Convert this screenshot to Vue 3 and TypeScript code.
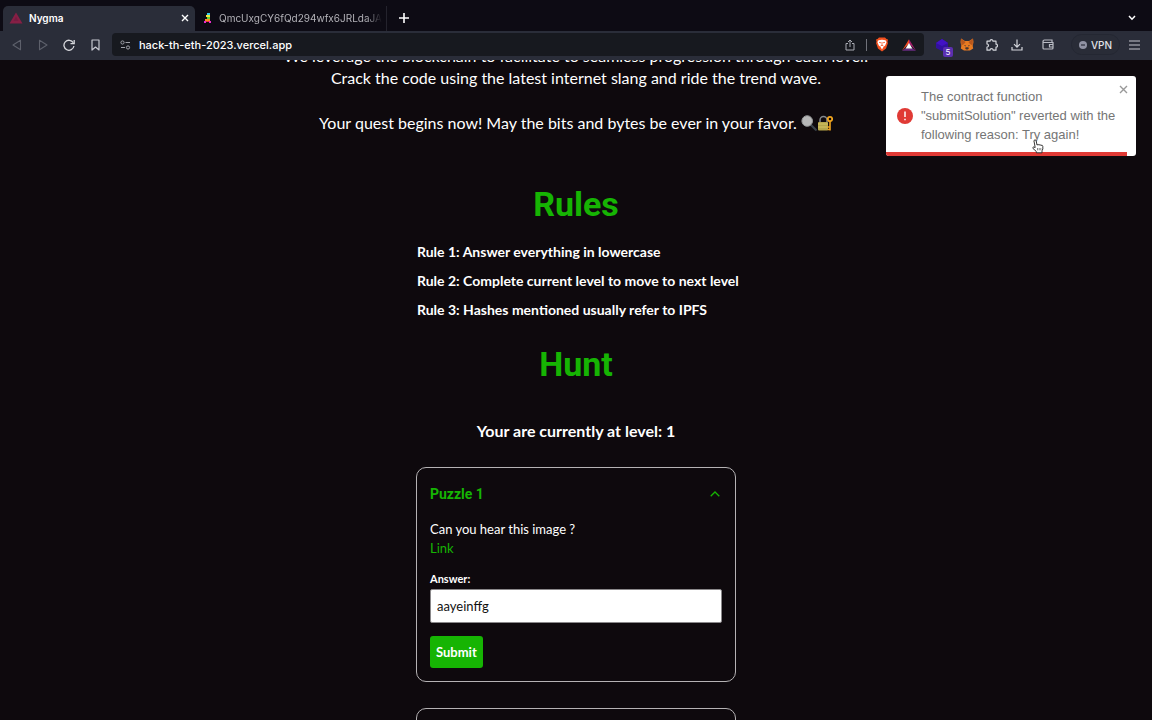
<script setup lang="ts">
import { ref } from 'vue'

const rules: string[] = [
  'Rule 1: Answer everything in lowercase',
  'Rule 2: Complete current level to move to next level',
  'Rule 3: Hashes mentioned usually refer to IPFS',
]
const level = ref(1)
const answer = ref('aayeinffg')
const open = ref(true)
const toastVisible = ref(true)
const progress = ref(96.4)
</script>

<template>
  <div class="window">
    <header class="chrome">
      <div class="tabs">
        <div class="tab active">
          <svg width="14" height="12" viewBox="0 0 14 12"><path d="M7 0.5 13.5 11.5H0.5Z" fill="#861f45" /><path d="M7 4.5 9.5 9h-5Z" fill="#751c42" /></svg>
          <span class="tab-title">Nygma</span>
          <button class="icon-btn tab-close" aria-label="Close tab">
            <svg width="8" height="8" viewBox="0 0 8 8"><path d="M1 1l6 6M7 1L1 7" stroke="#fff" stroke-width="1.4" /></svg>
          </button>
        </div>
        <div class="tab second">
          <svg width="10" height="12" viewBox="0 0 10 12">
            <path d="M4 1h3v2H4z" fill="#35c8e8" /><path d="M3 3h4v2H3z" fill="#f4e43a" /><path d="M4 5h3v2H4z" fill="#58d13b" />
            <path d="M2 7h5v2H2z" fill="#f58a24" /><path d="M1 9h2v2H1zM6 9h2v2H6z" fill="#e72ccb" /><path d="M3 9h3v1H3z" fill="#e83838" />
          </svg>
          <span class="tab-title">QmcUxgCY6fQd294wfx6JRLdaJAj7</span>
        </div>
        <button class="icon-btn new-tab" aria-label="New tab">
          <svg width="10" height="10" viewBox="0 0 10 10"><path d="M5 0v10M0 5h10" stroke="#fff" stroke-width="1.6" /></svg>
        </button>
        <button class="icon-btn tab-list" aria-label="Search tabs">
          <svg width="8" height="6" viewBox="0 0 8 6"><path d="M1 1l3 3.2L7 1" fill="none" stroke="#fff" stroke-width="1.5" /></svg>
        </button>
      </div>
      <div class="toolbar">
        <button class="icon-btn nav" aria-label="Back">
          <svg width="10" height="12" viewBox="0 0 10 12"><path d="M8.5 1.3v9.4L1 6Z" fill="none" stroke="#5d606b" stroke-width="1.1" stroke-linejoin="round" /></svg>
        </button>
        <button class="icon-btn nav" aria-label="Forward">
          <svg width="10" height="12" viewBox="0 0 10 12"><path d="M1.5 1.3v9.4L9 6Z" fill="none" stroke="#5d606b" stroke-width="1.1" stroke-linejoin="round" /></svg>
        </button>
        <button class="icon-btn nav" aria-label="Reload">
          <svg width="12" height="12" viewBox="0 0 12 12"><path d="M10.3 3.8A5 5 0 1 0 10.9 7" fill="none" stroke="#d8d9de" stroke-width="1.3" /><path d="M11.2 1v3.7H7.5" fill="none" stroke="#d8d9de" stroke-width="1.3" /></svg>
        </button>
        <button class="icon-btn nav" aria-label="Bookmark">
          <svg width="9" height="12" viewBox="0 0 9 12"><path d="M1 1h7v10L4.500 8 1 11Z" fill="none" stroke="#c6c8d0" stroke-width="1.2" stroke-linejoin="round" /></svg>
        </button>
        <div class="address">
          <svg width="11" height="10" viewBox="0 0 11 10" fill="none" stroke="#a0a2aa"><circle cx="2.500" cy="2.500" r="1.600" /><path d="M5.500 2.500H10" /><circle cx="8" cy="7.500" r="1.600" /><path d="M1 7.500h4" /></svg>
          <span class="url">hack-th-eth-2023.vercel.app</span>
          <button class="icon-btn" aria-label="Share">
            <svg width="10" height="12" viewBox="0 0 10 12" fill="none" stroke="#a9abb3"><path d="M3 4.500H1v6.500h8V4.500H7M5 8V1M3 3l2-2 2 2" /></svg>
          </button>
          <span class="divider"></span>
          <button class="icon-btn shield" aria-label="Shields">
            <svg width="14" height="15" viewBox="0 0 14 15"><path d="M4 .5h6L11.500 2 13 2.500 12.500 5l.5 1-2 5.500-4 3-4-3L1 6l.5-1L1 2.500 2.500 2Z" fill="#f2501e" /><path d="M3.500 3.200 7 2.800l3.500.4L11.600 5l-1.400 3.500-1.600 1.200L7 12.500 5.400 9.700 3.800 8.500 2.400 5Z" fill="#fff" /><path d="M4 5.300l2 .5M10 5.300l-2 .5M7 5v3.500M5.500 9 7 8.200 8.500 9" stroke="#f2501e" stroke-width=".8" fill="none" /></svg>
          </button>
          <button class="icon-btn bat" aria-label="Rewards">
            <svg width="14" height="12" viewBox="0 0 14 12"><path d="M7 .3 0 11.700 7 4.500Z" fill="#f04a23" /><path d="M7 .3 14 11.700 7 4.500Z" fill="#a41c6d" /><path d="M0 11.700h14L10.200 9.200H3.800Z" fill="#682b82" /><path d="M7 3.900 10.400 9.400H3.600Z" fill="#fff" /></svg>
          </button>
        </div>
        <button class="icon-btn ext cube" aria-label="Wallet extension, 5 requests">
          <svg width="14" height="14" viewBox="0 0 14 14"><path d="M7 1 13 5v5l-6 3-6-3V5Z" fill="#32119f" /><path d="M7 1 13 5 7 8 1 5Z" fill="#4212c4" /></svg>
          <span class="badge">5</span>
        </button>
        <button class="icon-btn ext" aria-label="MetaMask">
          <svg width="14" height="13" viewBox="0 0 14 13"><path d="M1 .500 5 3h4l4-2.500L13.500 4l-.8 4 .5 2.500L10 12.500H4L.800 10.500l.500-2.500L.500 4Z" fill="#e87b22" /><path d="M1 .500 5.500 4 4 6 1.300 7.500ZM13 .500 8.500 4 10 6l2.700 1.500Z" fill="#b8571d" /><path d="M4 7l1.800.5-.3 1ZM10 7l-1.800.5.3 1Z" fill="#252a3b" /><path d="M5 10l1-.8h2l1 .8-1 1.400H6Z" fill="#463631" /></svg>
        </button>
        <button class="icon-btn ext" aria-label="Extensions">
          <svg width="12" height="12" viewBox="0 0 12 12"><path d="M1 2.200h3a1.500 1.500 0 0 1 3 0h3v3a1.500 1.500 0 0 1 0 3v3H7.200a1.600 1.600 0 0 0-3.200 0H1V8a1.500 1.500 0 0 0 0-3Z" fill="none" stroke="#d4d6dc" stroke-width="1.200" stroke-linejoin="round" /></svg>
        </button>
        <button class="icon-btn ext" aria-label="Downloads">
          <svg width="12" height="12" viewBox="0 0 12 12"><path d="M6 .500v7.500M3 5.200l3 3 3-3M1 8v3h10V8" fill="none" stroke="#d4d6dc" stroke-width="1.200" /></svg>
        </button>
        <button class="icon-btn ext wallet" aria-label="Wallet">
          <svg width="12" height="11" viewBox="0 0 12 11" fill="none" stroke="#b9bbc4" stroke-width="1.200"><path d="M1 2.500V9q0 1 1 1h8q1 0 1-1V3.500H2.500Q1 3.500 1 2.300T2.500 1H10v2.500" /><path d="M11 5.500H7.500v2.500H11" /></svg>
        </button>
        <button class="vpn">
          <svg width="8" height="8" viewBox="0 0 8 8"><circle cx="4" cy="4" r="4" fill="#9092a3" /><path d="M2 4h4" stroke="#2a2d39" stroke-width="1.200" /></svg>
          VPN
        </button>
        <button class="icon-btn menu" aria-label="Menu">
          <svg width="11" height="10" viewBox="0 0 11 10"><path d="M0 1h11M0 5h11M0 9h11" stroke="#c4c6ce" stroke-width="1.200" /></svg>
        </button>
      </div>
    </header>

    <main class="page">
      <section class="intro">
        <p>We leverage the blockchain to facilitate to seamless progression through each level!<br />Crack the code using the latest internet slang and ride the trend wave.</p>
        <p class="quest">
          Your quest begins now! May the bits and bytes be ever in your favor.
          <svg class="emoji" width="16" height="16" viewBox="0 0 16 16" role="img" aria-label="magnifying glass"><path d="M10 10l4.800 4.800" stroke="#39434b" stroke-width="2.200" stroke-linecap="round" /><circle cx="6.200" cy="6" r="5.300" fill="#b7b8b8" stroke="#929596" /></svg><svg class="emoji" width="16" height="16" viewBox="0 0 16 16" role="img" aria-label="locked with key"><path d="M3 8V5a3.500 3.500 0 0 1 7 0v3" fill="none" stroke="#85898c" stroke-width="1.500" /><rect x="1" y="7" width="10" height="8.500" rx="1" fill="#b5a64b" /><path d="M1 9h10M1 12h10" stroke="#d4c566" /><circle cx="13" cy="4" r="2.200" fill="none" stroke="#f1a51e" stroke-width="1.800" /><path d="M13 6v9.500M12.500 12h-2M12.500 14.500h-2" stroke="#f1a51e" stroke-width="1.600" /></svg>
        </p>
      </section>

      <h2 class="pixel">Rules</h2>
      <ul class="rules">
        <li v-for="rule in rules" :key="rule">{{ rule }}</li>
      </ul>

      <h2 class="pixel">Hunt</h2>
      <p class="level">Your are currently at level: {{ level }}</p>

      <section class="card">
        <button class="card-head" :aria-expanded="open" @click="open = !open">
          <span>Puzzle 1</span>
          <svg width="10" height="6" viewBox="0 0 10 6"><path d="M.700 5.300 5 1l4.300 4.300" fill="none" stroke="#16b403" stroke-width="1.300" /></svg>
        </button>
        <form v-if="open" @submit.prevent>
          <p class="question">Can you hear this image ?<br /><a href="#">Link</a></p>
          <label for="answer">Answer:</label>
          <input id="answer" v-model="answer" type="text" />
          <button class="submit" type="submit">Submit</button>
        </form>
      </section>
      <section class="card">
        <button class="card-head" aria-label="Next puzzle"></button>
      </section>
    </main>

    <div v-if="toastVisible" class="toast" role="alert">
      <div class="toast-body">
        <svg width="16" height="16" viewBox="0 0 16 16"><circle cx="8" cy="8" r="8" fill="#e03a35" /><path d="M8 3.500v5.500M8 10.700v1.600" stroke="#fff" stroke-width="1.500" /></svg>
        <p>The contract function "submitSolution" reverted with the following reason: Try again!</p>
      </div>
      <button class="icon-btn toast-close" aria-label="Close" @click="toastVisible = false">
        <svg width="9" height="9" viewBox="0 0 9 9"><path d="M1 1l7 7M8 1L1 8" stroke="#999" stroke-width="1.400" /></svg>
      </button>
      <div class="progress" :style="{ width: progress + '%' }"></div>
    </div>
    <svg class="pointer" width="12" height="15" viewBox="0 0 12 15"><path d="M3.200 8.500 2 2.200Q2 .800 3 .800T4.200 2l.8 4q1.200-1 2 0 1.100-.8 1.900.3 1.600-.6 1.900 1 .5 3-.8 4.500v2H4.500l-.3-1.500L1 9.500Q.500 8 1.500 8Z" fill="#fff" stroke="#222" stroke-width=".9" stroke-linejoin="round" /><path d="M5.500 9v2.300M7.200 9v2.300M8.800 9v2.300" stroke="#333" stroke-width=".6" /></svg>
  </div>
</template>

<style>
html, body { background: #0e090d; }
</style>

<style scoped>
.window {
  position: relative;
  display: flex;
  flex-direction: column;
  height: 100vh;
  overflow: hidden;
  background: #0e090d;
  color: #fff;
  font-family: Lato, "Liberation Sans", sans-serif;
}
* { box-sizing: border-box; }
p, h2, ul { margin: 0; padding: 0; }
button { font-family: inherit; cursor: pointer; }
svg { display: block; flex: none; }
.icon-btn {
  display: flex;
  align-items: center;
  justify-content: center;
  padding: 0;
  border: 0;
  background: none;
}
.chrome { flex: none; background: #0d0b14; font-family: Inter, sans-serif; }
.tabs { display: flex; height: 31px; padding: 6px 4px 0 3px; }
.tab { display: flex; align-items: center; width: 192px; min-width: 0; font-size: 10px; }
.active { gap: 6px; padding: 0 6px 2px; background: #2a2d39; border-radius: 5px 5px 0 0; font-weight: 600; }
.tab-title { flex: 1; overflow: hidden; white-space: nowrap; }
.tab-close { width: 8px; }
.second { gap: 6px; padding: 0 4px 2px 8px; border-right: 1px solid #24232d; color: #b3b2b8; }
.second .tab-title {
  -webkit-mask-image: linear-gradient(90deg, #000 90%, transparent);
  mask-image: linear-gradient(90deg, #000 90%, transparent);
}
.new-tab { width: 34px; padding-bottom: 2px; }
.tab-list { width: 32px; margin-left: auto; padding-bottom: 2px; }
.toolbar { display: flex; align-items: center; height: 29px; padding: 0 12px 2px 4px; background: #2a2d39; }
.nav { width: 26px; height: 22px; }
.address {
  display: flex;
  flex: 1;
  align-items: center;
  height: 23px;
  margin-left: 4px;
  padding: 0 8px;
  border-radius: 4px;
  background: #17191f;
  font-size: 11px;
  font-weight: 500;
}
.url { flex: 1; margin-left: 8px; }
.divider { width: 1px; height: 12px; margin: 0 8px 0 11px; background: #70727a; }
.bat { margin-left: 13px; }
.ext { position: relative; width: 25px; height: 24px; }
.cube { margin-left: 6px; }
.badge {
  position: absolute;
  right: 2px;
  bottom: 0;
  width: 10px;
  border-radius: 2px;
  background: #5b2fb0;
  color: #fff;
  font-size: 8px;
  line-height: 10px;
}
.wallet { margin-left: 6px; }
.vpn {
  display: flex;
  align-items: center;
  gap: 4px;
  height: 21px;
  margin-left: 10px;
  padding: 0 7px;
  border: 1px solid #242732;
  border-radius: 11px;
  background: #292c37;
  color: #e1e2e8;
  font-size: 10px;
  font-weight: 500;
}
.menu { width: 12px; margin-left: 8px; }

.page {
  display: flex;
  flex: 1;
  flex-direction: column;
  align-items: center;
  min-height: 0;
  overflow: hidden;
}
.intro { flex: none; margin-top: -15px; font-size: 16px; line-height: 22px; text-align: center; }
.quest { display: flex; align-items: center; justify-content: center; margin-top: 23px; }
.quest .emoji:first-of-type { margin-left: 4px; }
.pixel {
  flex: none;
  margin-top: 46px;
  color: #16b403;
  font-family: Roboto, sans-serif;
  font-size: 34px;
  font-weight: 700;
  line-height: 48px;
}
.rules { flex: none; width: 318px; margin-top: 9px; list-style: none; font-size: 14px; font-weight: 700; line-height: 29px; white-space: nowrap; }
.rules + .pixel { margin-top: 16px; }
.level { margin-top: 32px; font-size: 16px; font-weight: 700; line-height: 21px; }
.card {
  flex: none;
  width: 320px;
  margin-top: 26px;
  padding: 12px 13px 13px;
  border: 1px solid #b5b2b4;
  border-radius: 10px;
}
.card-head {
  display: flex;
  align-items: center;
  justify-content: space-between;
  width: 100%;
  height: 28px;
  padding: 0 2px 0 0;
  border: 0;
  background: none;
  color: #16b403;
  font-family: Roboto, sans-serif;
  font-size: 14px;
  font-weight: 700;
}
.question { margin-top: 12px; font-size: 13px; line-height: 19px; }
.question a { color: #16b403; text-decoration: none; }
label { display: block; margin-top: 13px; font-size: 11px; font-weight: 700; line-height: 16px; }
input {
  display: block;
  width: 100%;
  height: 34px;
  margin-top: 2px;
  padding: 0 6px;
  border: 1px solid #8a888a;
  border-radius: 2px;
  background: #fff;
  color: #111;
  font: 13px Lato, sans-serif;
}
.submit {
  height: 32px;
  margin-top: 13px;
  padding: 0 6px;
  border: 0;
  border-radius: 3px;
  background: #16b403;
  color: #fff;
  font-size: 13px;
  font-weight: 700;
}
.toast {
  position: absolute;
  top: 76px;
  right: 16px;
  width: 250px;
  overflow: hidden;
  border-radius: 3px;
  background: #fff;
  color: #757575;
  font-family: "Liberation Sans", Arial, sans-serif;
  font-size: 13px;
  line-height: 19px;
}
.toast-body { display: flex; align-items: center; gap: 8px; padding: 11px 16px 12px 11px; }
.toast-close { position: absolute; top: 9px; right: 8px; }
.progress { position: absolute; bottom: 0; left: 0; height: 4px; background: #e03a35; }
.pointer { position: absolute; top: 139px; left: 1032px; }
</style>
